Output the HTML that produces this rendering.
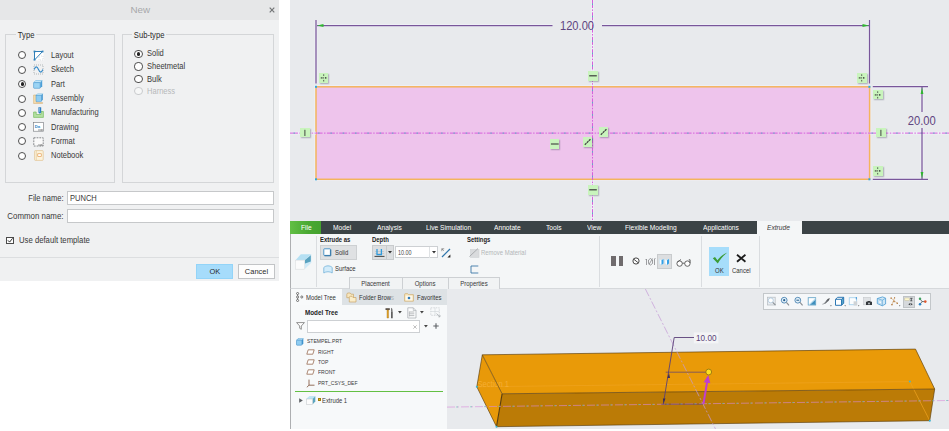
<!DOCTYPE html>
<html lang="en">
<head>
<meta charset="utf-8">
<title>New</title>
<style>
*{box-sizing:border-box;margin:0;padding:0}
html,body{width:949px;height:431px;overflow:hidden;background:#fff}
body{position:relative;font-family:"Liberation Sans",sans-serif;font-size:8px;color:#2b2b2b}
.abs,.abs *{position:absolute}
.t{position:absolute;white-space:nowrap;line-height:10px}
/* dialog */
#dlg{position:absolute;left:0;top:0;width:279px;height:281px;background:#f0f1f2}
#dlg .title{position:absolute;left:0;top:0;width:279px;height:19.500px;background:#e6e7e8}
#dlg .title span{position:absolute;left:0.700px;width:279px;text-align:center;top:3.300px;font-size:9.800px;line-height:13px;color:#a6a8aa}
.fs{position:absolute;border:1px solid #d4d6d8}
.fs .lg{position:absolute;top:-5.500px;background:#f0f1f2;padding:0 2px;font-size:8.300px;line-height:10px;color:#2a2a2a;transform:scaleX(.92);transform-origin:0 50%}
.rd{position:absolute;width:8.200px;height:8.200px;border:1px solid #4f4f4f;border-radius:50%;background:#fff}
.rd.on::after{content:"";position:absolute;left:1.400px;top:1.400px;width:3.400px;height:3.400px;border-radius:50%;background:#222}
.rd.dis{border-color:#c9cbcd;background:#f6f7f7}
.lb{position:absolute;white-space:nowrap;font-size:8.200px;line-height:10px;color:#383838;transform:scaleX(.92);transform-origin:0 50%}
.lb.r{transform-origin:100% 50%}
.inp{position:absolute;background:#fff;border:1px solid #c6c8ca}
.btn{position:absolute;border:1px solid #c2c4c6;background:#fdfdfd;text-align:center;font-size:8px;line-height:14.400px;color:#2a2a2a}
.btn span{display:inline-block;transform:scaleX(.93)}
.ic{position:absolute}
/* right side */
#sk{position:absolute;left:290px;top:0;width:659px;height:221px;background:#e8eaed;overflow:hidden}
#app{position:absolute;left:290px;top:221px;width:659px;height:208px;background:#e8eaed;overflow:hidden}
.gb{position:absolute;background:#c9f4bd;box-shadow:.6px .8px 1.200px rgba(60,60,80,.35)}
.gb svg{position:absolute;left:0;top:0}
.mn{top:1.5px;font-size:7px;color:#fff;transform:scaleX(.95);transform-origin:0 50%}
.rb{font-weight:bold;font-size:6.9px;color:#222;transform:scaleX(.86);transform-origin:0 50%}
.rl{font-size:7px;color:#333;transform:scaleX(.85);transform-origin:0 50%}
.tr{font-size:6.100px;color:#383838;transform:scaleX(.83);transform-origin:0 50%}
.vs{position:absolute;top:15px;width:1px;height:51px;background:#dadde0}
.tab span{display:inline-block;transform:scaleX(.86)}
.tab{position:absolute;top:56.400px;height:11.600px;background:#f1f3f4;border:1px solid #cdd0d3;border-bottom:0;text-align:center;font-size:7px;line-height:11.600px;color:#383838}
</style>
</head>
<body>
<!-- ============ NEW DIALOG ============ -->
<div id="dlg">
  <div class="title"><span>New</span></div>
  <svg class="ic" style="left:268.500px;top:6.600px" width="6" height="6" viewBox="0 0 6 6"><path d="M.7 .7L5.300 5.300M5.300 .7L.7 5.300" stroke="#737577" stroke-width="1.200" fill="none"/></svg>

  <div class="fs" style="left:5px;top:34px;width:110px;height:149px"><span class="lg" style="left:10px">Type</span></div>
  <div class="fs" style="left:122px;top:34px;width:152px;height:149px"><span class="lg" style="left:9px">Sub-type</span></div>

  <!-- type radios -->
  <div class="rd" style="left:18.200px;top:51.0px"></div><svg class="ic" style="left:33px;top:49.8px" width="11" height="11" viewBox="0 0 11 11"><rect x="1" y="1" width="9.500" height="9.500" fill="#fff"/><path d="M1.500 10V1.500H10M1.500 10L9.500 1.500" fill="none" stroke="#2f7fb8" stroke-width="1"/><path d="M6 6h4v4H6z" fill="none" stroke="#c8ccd0" stroke-width=".6" stroke-dasharray="1 1"/><g fill="#2f7fb8"><rect x=".6" y=".6" width="1.800" height="1.800"/><rect x="8.700" y=".6" width="1.800" height="1.800"/><rect x=".6" y="8.800" width="1.800" height="1.800"/></g></svg><div class="lb" style="left:50.500px;top:50.6px">Layout</div>
  <div class="rd" style="left:18.200px;top:65.5px"></div><svg class="ic" style="left:33px;top:64.3px" width="11" height="11" viewBox="0 0 11 11"><rect x="1" y="1" width="9" height="9" fill="none" stroke="#9a9ea2" stroke-width=".7" stroke-dasharray="1 1"/><path d="M1.200 5.500C2.500 2 4 2 5.500 5.500S8.500 9 9.800 5.500" fill="none" stroke="#2f86c6" stroke-width="1.100"/></svg><div class="lb" style="left:50.500px;top:65.1px">Sketch</div>
  <div class="rd on" style="left:18.200px;top:80.0px"></div><svg class="ic" style="left:33px;top:79.8px" width="10" height="9" viewBox="0 0 10 9"><path d="M.6 2.600L2.600 .6h6.600L7.200 2.600z" fill="#c9e9f9" stroke="#55a8dc" stroke-width=".5"/><path d="M9.200 .6v5.600L7.200 8.300V2.600z" fill="#4a9fd8"/><rect x=".6" y="2.600" width="6.600" height="5.700" rx=".7" fill="#9bd4f4" stroke="#4496cf" stroke-width=".6"/></svg><div class="lb" style="left:50.500px;top:79.6px">Part</div>
  <div class="rd" style="left:18.200px;top:94.5px"></div><svg class="ic" style="left:33px;top:93.3px" width="11" height="11" viewBox="0 0 11 11"><path d="M.6 2h3v7.500h6v1H.6z" fill="#f5dcae" stroke="#d2ab6c" stroke-width=".5"/><path d="M3 2.300L4.500 .8h5.300L8.300 2.300z" fill="#c9e9f9" stroke="#55a8dc" stroke-width=".4"/><path d="M9.800 .8v6L8.300 8.400V2.300z" fill="#3f95cf"/><rect x="3" y="2.300" width="5.300" height="6.100" fill="#8fcdf2" stroke="#4496cf" stroke-width=".5"/></svg><div class="lb" style="left:50.500px;top:94.1px">Assembly</div>
  <div class="rd" style="left:18.200px;top:108.6px"></div><svg class="ic" style="left:33px;top:107.4px" width="11" height="11" viewBox="0 0 11 11"><path d="M.6 5h2.600v2.500h4.800V4.500h2.400v5.900H.6z" fill="#b5e0a2" stroke="#6ab650" stroke-width=".6"/><path d="M5.400 .3h2.800v5.200l-1.400 1.300l-1.400-1.300z" fill="#2f7fc2"/><path d="M6.400 .8v4" stroke="#bfe0f5" stroke-width=".6"/></svg><div class="lb" style="left:50.500px;top:108.2px">Manufacturing</div>
  <div class="rd" style="left:18.200px;top:123.0px"></div><svg class="ic" style="left:33px;top:122.3px" width="11" height="10" viewBox="0 0 11 10"><rect x=".6" y=".6" width="9.800" height="8.600" fill="#fff" stroke="#74787c" stroke-width=".6"/><text x="1.800" y="5.600" font-family="Liberation Sans, sans-serif" font-size="4.200" font-weight="bold" fill="#2f86c6">Da</text><path d="M5.500 8h4.500" stroke="#333" stroke-width="1.100" stroke-dasharray=".8 .5"/></svg><div class="lb" style="left:50.500px;top:122.6px">Drawing</div>
  <div class="rd" style="left:18.200px;top:137.3px"></div><svg class="ic" style="left:33px;top:136.6px" width="11" height="10" viewBox="0 0 11 10"><rect x=".8" y=".8" width="9.400" height="8.200" fill="#fafafa" stroke="#55595d" stroke-width=".7" stroke-dasharray="1.800 1" stroke-linecap="butt"/><path d="M5.500 8h4.300" stroke="#333" stroke-width="1" stroke-dasharray=".8 .5"/></svg><div class="lb" style="left:50.500px;top:136.9px">Format</div>
  <div class="rd" style="left:18.200px;top:151.5px"></div><svg class="ic" style="left:33.500px;top:150.3px" width="10" height="11" viewBox="0 0 10 11"><rect x=".6" y=".6" width="8.600" height="9.800" rx=".8" fill="#fcf3dc" stroke="#dbb981" stroke-width=".6"/><path d="M2.300 .8v9.400" stroke="#e2c48f" stroke-width=".6"/><rect x="3.800" y="3.800" width="3.400" height="2.800" fill="#fff" stroke="#df8b35" stroke-width=".6"/></svg><div class="lb" style="left:50.500px;top:151.1px">Notebook</div>

  <!-- subtype radios -->
  <div class="rd on" style="left:134.400px;top:49.8px"></div><div class="lb" style="left:147.100px;top:49.4px">Solid</div>
  <div class="rd" style="left:134.400px;top:62.4px"></div><div class="lb" style="left:147.100px;top:62.0px">Sheetmetal</div>
  <div class="rd" style="left:134.400px;top:74.9px"></div><div class="lb" style="left:147.100px;top:74.5px">Bulk</div>
  <div class="rd dis" style="left:134.400px;top:87.3px"></div><div class="lb" style="left:147.100px;top:86.9px;color:#b6b8ba">Harness</div>

  <div class="lb r" style="left:0;width:63.500px;text-align:right;top:193.600px">File name:</div>
  <div class="inp" style="left:67px;top:190.800px;width:207.300px;height:14.200px"></div>
  <div class="lb" style="left:70px;top:193.600px">PUNCH</div>
  <div class="lb r" style="left:0;width:63.500px;text-align:right;top:211.700px;transform:scaleX(.965)">Common name:</div>
  <div class="inp" style="left:67px;top:209.300px;width:207.300px;height:14.200px"></div>

  <div class="inp" style="left:6.300px;top:236.600px;width:7.800px;height:7.800px;border-color:#4a4a4a"></div>
  <svg class="ic" style="left:7px;top:237.300px" width="6.500" height="6.500" viewBox="0 0 7 7"><path d="M1 3.600L2.800 5.500L6 1.400" stroke="#222" stroke-width="1" fill="none"/></svg>
  <div class="lb" style="left:19.100px;top:235.800px;transform:scaleX(.943)">Use default template</div>

  <div style="position:absolute;left:0;top:257px;width:279px;height:1px;background:#dcdee0"></div>
  <div class="btn" style="left:196px;top:264px;width:37px;height:15.400px;background:#a6dcfb;border-color:#93d4f8"><span>OK</span></div>
  <div class="btn" style="left:237.800px;top:264px;width:37px;height:15.400px"><span>Cancel</span></div>
</div>

<!-- ============ SKETCH ============ -->
<div id="sk">
<svg width="659" height="221" viewBox="290 0 659 221" style="position:absolute;left:0;top:0">
  <rect x="316" y="86.800" width="553.600" height="92.500" fill="none" stroke="#eef0f8" stroke-width="3.200"/>
  <g stroke="#eef0f6" stroke-width="3" fill="none">
    <path d="M316 20V83.400M869.500 20V83.400M317 25.600H552.500M602 25.600H869"/>
    <path d="M872.800 86.700H928M872.800 179.300H928M922 87V112M922 128V179"/>
  </g>
  <rect x="316" y="86.800" width="553.600" height="92.500" fill="#eec4ec" stroke="#f4b45c" stroke-width="1.500"/>
  <!-- centerlines -->
  <path d="M290 133.100H316M869.600 133.100H949M592.500 0V86M592.500 180V221" fill="none" stroke="#eef0f6" stroke-width="2.600"/>
  <g fill="none" stroke-width="1">
    <path d="M290 133.100H949" stroke="#d75fdc" stroke-dasharray="8 1.400 1.500 1.400"/>
    <path d="M290 133.100H949" stroke="#55b4c6" stroke-dasharray="1.500 10.800" stroke-dashoffset="-3.500"/>
    <path d="M592.500 0V221" stroke="#d75fdc" stroke-dasharray="8 1.400 1.500 1.400"/>
    <path d="M592.500 0V221" stroke="#55b4c6" stroke-dasharray="1.500 10.800" stroke-dashoffset="-3.500"/>
  </g>
  <!-- dimensions -->
  <g stroke="#79569a" stroke-width="1.250" fill="none">
    <path d="M316 20V83.400M869.500 20V83.400M317 25.600H552.500M602 25.600H869"/>
    <path d="M872.800 86.700H928M872.800 179.300H928M922 87V112M922 128V179"/>
  </g>
  <g fill="#2fb62f">
    <path d="M317 25.600l6.500 -1.500v3z"/><path d="M869 25.600l-6.500 -1.500v3z"/>
    <path d="M922 87.500l-1.400 6.500h2.800z"/><path d="M922 178.500l-1.400 -6.500h2.800z"/>
  </g>
  <g fill="#2fa8dc"><rect x="315" y="85.800" width="2" height="2"/><rect x="868.400" y="85.800" width="2" height="2"/><rect x="315" y="178.300" width="2" height="2"/><rect x="868.400" y="178.300" width="2" height="2"/></g>
  <g font-family="Liberation Sans, sans-serif" font-size="12.600" fill="#5f4580">
    <text x="560" y="30.200" textLength="34" lengthAdjust="spacingAndGlyphs">120.00</text>
    <text x="907.700" y="125.200" textLength="28" lengthAdjust="spacingAndGlyphs">20.00</text>
  </g>
</svg>
<!-- constraint markers -->
<div class="gb" style="left:29px;top:72.8px;width:9.4px;height:9.8px"><svg width="9.400" height="9.800" viewBox="0 0 9.400 9.800"><path d="M4.700 1.300v1.600M4.700 6.900v1.600" stroke="#333" stroke-width=".8"/><path d="M1.200 4.900L3.400 4V5.800zM8.200 4.900L6 4V5.800z" fill="#2e2e2e"/><rect x="4.300" y="4.300" width=".8" height="1.200" fill="#333"/></svg></div>
<div class="gb" style="left:567.4px;top:72.8px;width:9.4px;height:9.8px"><svg width="9.400" height="9.800" viewBox="0 0 9.400 9.800"><path d="M4.700 1.300v1.600M4.700 6.900v1.600" stroke="#333" stroke-width=".8"/><path d="M1.200 4.900L3.400 4V5.800zM8.200 4.900L6 4V5.800z" fill="#2e2e2e"/><rect x="4.300" y="4.300" width=".8" height="1.200" fill="#333"/></svg></div>
<div class="gb" style="left:583.3px;top:89.5px;width:9.4px;height:9.8px"><svg width="9.400" height="9.800" viewBox="0 0 9.400 9.800"><path d="M4.700 1.300v1.600M4.700 6.900v1.600" stroke="#333" stroke-width=".8"/><path d="M1.200 4.900L3.400 4V5.800zM8.200 4.900L6 4V5.800z" fill="#2e2e2e"/><rect x="4.300" y="4.300" width=".8" height="1.200" fill="#333"/></svg></div>
<div class="gb" style="left:583.3px;top:166.4px;width:9.4px;height:9.8px"><svg width="9.400" height="9.800" viewBox="0 0 9.400 9.800"><path d="M4.700 1.300v1.600M4.700 6.900v1.600" stroke="#333" stroke-width=".8"/><path d="M1.200 4.900L3.400 4V5.800zM8.200 4.900L6 4V5.800z" fill="#2e2e2e"/><rect x="4.300" y="4.300" width=".8" height="1.200" fill="#333"/></svg></div>
<div class="gb" style="left:297.8px;top:71.4px;width:10px;height:9.6px"><svg width="10" height="9.600" viewBox="0 0 10 9.600"><path d="M1.200 4.800H8.800" stroke="#3c3c3c" stroke-width="1.200"/></svg></div>
<div class="gb" style="left:297.8px;top:185.2px;width:10px;height:9.6px"><svg width="10" height="9.600" viewBox="0 0 10 9.600"><path d="M1.200 4.800H8.800" stroke="#3c3c3c" stroke-width="1.200"/></svg></div>
<div class="gb" style="left:259.9px;top:138.6px;width:9.6px;height:10px"><svg width="9.600" height="10" viewBox="0 0 9.600 10"><path d="M.9 5H8.700" stroke="#3c3c3c" stroke-width="1.100"/></svg></div>
<div class="gb" style="left:293px;top:137.1px;width:9.4px;height:9.8px"><svg width="9.400" height="9.800" viewBox="0 0 9.400 9.800"><path d="M1.800 7.700L7.600 2.100" stroke="#444" stroke-width="1.300" stroke-dasharray="2.300 .5"/></svg></div>
<div class="gb" style="left:309px;top:127.4px;width:9.4px;height:9.8px"><svg width="9.400" height="9.800" viewBox="0 0 9.400 9.800"><path d="M1.800 7.700L7.600 2.100" stroke="#444" stroke-width="1.300" stroke-dasharray="2.300 .5"/></svg></div>
<div class="gb" style="left:10.3px;top:127.7px;width:9.8px;height:9.8px"><svg width="9.800" height="9.800" viewBox="0 0 9.800 9.800"><path d="M4.900 1.800V8" stroke="#333" stroke-width=".9"/></svg></div>
<div class="gb" style="left:586px;top:127.7px;width:9.8px;height:9.8px"><svg width="9.800" height="9.800" viewBox="0 0 9.800 9.800"><path d="M4.900 1.800V8" stroke="#333" stroke-width=".9"/></svg></div>
</div>

<!-- ============ APP ============ -->
<div id="app">
<!-- 3D graphics -->
<svg width="659" height="208" viewBox="290 221 659 208" style="position:absolute;left:0;top:0">
  <!-- box faces -->
  <polygon points="482.3,354.8 915.5,349.1 934.7,389 502.1,393.8" fill="#e99a08"/>
  <polygon points="482.3,354.8 502.1,393.8 496.5,426.7 476.8,386.8" fill="#e89909"/>
  <polygon points="502.1,393.8 934.7,389 929.8,420.7 496.5,426.7" fill="#bb7b06"/>
  <!-- hidden section outline -->
  <g fill="none" stroke="#efa31f" stroke-width="0.7">
    <path d="M476.8 386.8L909.8 381.6L929.8 420.7"/>
  </g>
  <text x="477.4" y="387.3" font-family="Liberation Sans, sans-serif" font-size="8.2" fill="#f5ae34" textLength="31.5" lengthAdjust="spacingAndGlyphs">Section 1</text>
  <g fill="none" stroke="#5a3d0c" stroke-width="0.65">
    <path d="M482.3 354.8L915.5 349.1L934.7 389L502.1 393.8Z"/>
    <path d="M482.3 354.8L476.8 386.8L496.5 426.7"/><path d="M496.5 426.700L502.100 393.800" stroke-width="1.100"/>
    <path d="M934.7 389L929.8 420.7L496.5 426.7"/>
  </g>
  <g fill="#35b7d9"><circle cx="476.8" cy="386.8" r="1"/><circle cx="909.8" cy="381.6" r="1"/><circle cx="929.8" cy="420.800" r="1"/><circle cx="496.500" cy="426.800" r="1"/></g>
  <!-- axes -->
  <g fill="none" stroke-width=".8" stroke-dasharray="8 2 2 2">
    <path d="M447 407.1L949 400.5" stroke="#d98ad9" opacity=".75"/>
    <path d="M645.4 289L715.5 429" stroke="#c49ad6" opacity=".9"/>
  </g>
  <path d="M447 407.1L949 400.5" fill="none" stroke="#5fc0b0" stroke-width=".8" stroke-dasharray="2 12" stroke-dashoffset="-9" opacity=".7"/>
  <!-- depth dimension -->
  <rect x="693.8" y="332.4" width="24.6" height="11" fill="#f3f4f6"/>
  <text x="696" y="341.3" font-family="Liberation Sans, sans-serif" font-size="8.6" fill="#5b4478" textLength="20.5" lengthAdjust="spacingAndGlyphs">10.00</text>
  <g fill="none" stroke="#5a3f78" stroke-width="0.9">
    <path d="M694 337.5H674.2L663.3 404.2"/>
    <path d="M665.7 372.200H706M661.3 404.200H703" stroke-width=".7"/>
  </g>
  <path d="M669 373l-1.6 5h2.6zM663.5 403.5l-0.6 -5h2.6z" fill="#3a2a55"/>
  <path d="M703.4 404L707.3 381" stroke="#c03fd0" stroke-width="2" fill="none"/>
  <path d="M708.3 375l-4.6 7.2 6.6 1.1z" fill="#c03fd0"/>
  <circle cx="708.7" cy="372" r="2.9" fill="#ffe11f" stroke="#8a6a10" stroke-width="0.8"/>
</svg>
<!-- graphics toolbar -->
<div style="position:absolute;left:473.2px;top:72.2px;width:167.5px;height:16.5px;background:#f5f7f9;border:1px solid #c3c7ca"></div>
<div style="position:absolute;left:612.900px;top:74.500px;width:12.200px;height:12.200px;background:#d6d9dc;border:1px solid #bfc3c6"></div>
<svg width="168" height="17" viewBox="763 293 168 17" style="position:absolute;left:473px;top:72px">
  <!-- 1 zoom fit -->
  <rect x="767.400" y="297.200" width="7.800" height="7.800" fill="#e9edf1" stroke="#b4bac0" stroke-width=".7"/>
  <circle cx="770.800" cy="300.400" r="2.500" fill="#fff" stroke="#a9c4d9" stroke-width=".8"/><path d="M772.700 302.400l2.800 2.800" stroke="#8a9096" stroke-width="1.100"/>
  <!-- 2 zoom in -->
  <circle cx="784.200" cy="300.200" r="2.900" fill="#e3f0f9" stroke="#4d86b3" stroke-width=".9"/><circle cx="784.200" cy="300.200" r="1.100" fill="#245d8c"/><path d="M786.400 302.400l2.600 3" stroke="#858b91" stroke-width="1.100"/>
  <!-- 3 zoom out -->
  <circle cx="797.800" cy="300.200" r="2.900" fill="#e3f0f9" stroke="#4d86b3" stroke-width=".9"/><path d="M796.400 300.200h2.800" stroke="#245d8c" stroke-width="1"/><path d="M800 302.400l2.600 3" stroke="#858b91" stroke-width="1.100"/>
  <!-- 4 repaint -->
  <rect x="808.200" y="297.700" width="7.500" height="7.300" fill="#fdfeff" stroke="#5b9fc4" stroke-width=".8"/><path d="M815.400 299.500v5.200h-5.600z" fill="#3f8fbd"/><path d="M815.400 298v1.500l-5.600 5.200h-1.300z" fill="#b9dcee"/>
  <!-- 5 shading -->
  <path d="M821.800 304.400c3-.3 3.600-2.600 4.700-4.200c.9-1.300 2-1.800 3.300-2.300c-.2 1.600-1 2.600-2.100 3.700c-1.500 1.500-2.900 3.100-5.900 2.800z" fill="#55585c"/><path d="M822.500 304c2.500-.6 3.500-2.300 4.600-3.600" stroke="#9a9ea2" stroke-width=".6" fill="none"/><path d="M830.200 305.200h1.500l-.75 1.200z" fill="#555"/>
  <!-- 6 saved orientations -->
  <path d="M835.500 299.300h6v6h-6z" fill="#fdfeff"/><path d="M841.500 299.300l2.200-2v6l-2.200 2z" fill="#58a6c8"/><path d="M835.500 299.300h6v6h-6zM835.500 299.300l2.200-2h6l-2.200 2M843.700 297.300v6l-2.200 2" fill="none" stroke="#2d78b4" stroke-width="1" stroke-linejoin="round"/><path d="M844.400 305.200h1.500l-.75 1.200z" fill="#555"/>
  <!-- 7 view manager -->
  <rect x="849.300" y="297.700" width="7.300" height="7" fill="#fbfdfe" stroke="#a6d2ee" stroke-width=".9"/><rect x="853.600" y="301.300" width="3.600" height="4.200" fill="#cfd3d6"/><path d="M856.300 297v2.400" stroke="#3c8ed0" stroke-width=".9"/><path d="M858 305.300h1.400l-.7 1.100z" fill="#555"/>
  <!-- 8 camera -->
  <rect x="863.500" y="297.400" width="7" height="7.400" fill="#dfe2e5" stroke="#c3c7cb" stroke-width=".6"/><path d="M866 301.700h1.200l.5-.7h2.400l.5.700h1.400v3.400h-6z" fill="#34383c"/><circle cx="869" cy="303.400" r="1" fill="#b9bdc1"/>
  <!-- 9 perspective -->
  <path d="M877.300 298.500l5.300-1.600l3 1.300v5.800l-3.300 1.800l-5-2.200z" fill="#cfe7f6" stroke="#4a9ad2" stroke-width=".8" stroke-linejoin="round"/><path d="M877.300 298.500l5 1.700l3.300-2M882.300 300.200v5.600" stroke="#4a9ad2" stroke-width=".6" fill="none"/><path d="M879 300.500l2.300.8v2.800l-2.300-.9z" fill="#fff" stroke="#7fb9e0" stroke-width=".4"/>
  <!-- 10 datum display -->
  <g fill="#a8692a"><rect x="890.500" y="297.500" width="1.300" height="1.300"/><rect x="894" y="297.300" width="1.100" height="1.100"/><rect x="893.300" y="300.800" width="1.400" height="1.400"/><rect x="891.300" y="304" width="1.300" height="1.300"/><rect x="896.600" y="302.600" width="1.300" height="1.300"/></g>
  <path d="M891 298l6.300 5.300M894.600 297.800l-2.700 6.800" stroke="#c99457" stroke-width=".5"/><path d="M899 305.300h1.400l-.7 1.100z" fill="#555"/>
  <!-- 11 annotation display -->
  <rect x="904.800" y="298" width="4.400" height="2.300" fill="#fdf7cf" stroke="#c9c29a" stroke-width=".5"/><path d="M910.200 298.300h2.300M911.300 298.300v2.600M910.300 300.800h2" stroke="#3e4246" stroke-width=".8" fill="none"/><path d="M908.300 304.200q2.200-2 4.400 0q-2.200 2-4.400 0z" fill="#3a3e42"/><circle cx="910.500" cy="304.200" r=".6" fill="#d5d8db"/>
  <!-- 12 spin center -->
  <path d="M922 301.600l-2-2.900M922 301.600l-2 2.700M922 301.600h3.200" stroke="#4a4e52" stroke-width=".8" fill="none"/>
  <circle cx="920" cy="298.700" r="1.250" fill="#3fa060"/><circle cx="920" cy="304.300" r="1.250" fill="#2b83c6"/><circle cx="925.300" cy="301.600" r="1.300" fill="#e0582f"/>
</svg>
<!-- menubar -->
<div style="position:absolute;left:0;top:0;width:659px;height:13px;background:#3b4346"></div>
<div style="position:absolute;left:0;top:0;width:31px;height:13px;background:linear-gradient(90deg,#62bf45,#49a832 60%,#44a22e)"></div>
<div style="position:absolute;left:466.6px;top:0;width:45.4px;height:13px;background:#f4f6f7"></div>
<div class="t mn" style="left:10.7px">File</div>
<div class="t mn" style="left:43px">Model</div>
<div class="t mn" style="left:87.2px">Analysis</div>
<div class="t mn" style="left:135.6px">Live Simulation</div>
<div class="t mn" style="left:204.4px">Annotate</div>
<div class="t mn" style="left:255.9px">Tools</div>
<div class="t mn" style="left:297px">View</div>
<div class="t mn" style="left:335.4px">Flexible Modeling</div>
<div class="t mn" style="left:413px">Applications</div>
<div class="t mn" style="left:476.7px;color:#3a3a3a;font-style:italic">Extrude</div>
<!-- ribbon -->
<div style="position:absolute;left:0;top:13px;width:659px;height:55px;background:#f4f6f7;border-bottom:1px solid #d5d8db;border-left:1px solid #adafb1"></div>
<div class="vs" style="left:26px"></div><div class="vs" style="left:309px"></div><div class="vs" style="left:411px"></div><div class="vs" style="left:469px"></div>
<!-- extrude feature icon -->
<svg class="ic" style="left:5px;top:32px" width="17" height="17" viewBox="0 0 17 17">
  <path d="M0.500 7.200L5.800 1.300h10.500L9.600 7.200z" fill="#b5e0f3"/>
  <path d="M16.300 1.300v8.500L9.600 16.200V7.200z" fill="#cfeaf8"/>
  <path d="M10 6.900L15.800 2.200v6.300L10 10.400z" fill="#5aa3c0"/>
  <rect x=".5" y="7.200" width="9.100" height="9" fill="#fbfbfb" stroke="#dcdee0" stroke-width=".6"/>
</svg>
<div class="t rb" style="left:30.2px;top:13.5px">Extrude as</div>
<div class="t rb" style="left:82.3px;top:13.5px">Depth</div>
<div class="t rb" style="left:176.5px;top:13.5px">Settings</div>
<div style="position:absolute;left:30.2px;top:24.2px;width:36.7px;height:14.4px;background:#dfe1e3;border:1px solid #cdd0d2"></div>
<svg class="ic" style="left:33px;top:27.1px" width="9" height="9" viewBox="0 0 9 9"><rect x=".8" y=".8" width="6.600" height="6.600" rx=".5" fill="#fff" stroke="#3c8cc4" stroke-width=".9"/><path d="M7.800 1.500v6.300h-6.300" stroke="#2a6d9e" stroke-width=".9" fill="none"/></svg>
<div class="t rl" style="left:44.8px;top:27.1px">Solid</div>
<svg class="ic" style="left:32.6px;top:43.6px" width="10" height="9" viewBox="0 0 10 9"><path d="M.8 2.500C3 .3 7 .3 9.200 2.500V8C7 6.300 3 6.300 .8 8z" fill="#d3ecfa" stroke="#7fb9dc" stroke-width=".9"/></svg>
<div class="t rl" style="left:44.8px;top:42.8px">Surface</div>
<!-- depth -->
<div style="position:absolute;left:81.9px;top:24.2px;width:21.7px;height:14.4px;background:#dddfe1;border:1px solid #c8cbcd"></div>
<div style="position:absolute;left:96.2px;top:24.7px;width:1px;height:13.4px;background:#c8cbcd"></div>
<svg class="ic" style="left:84px;top:27px" width="11" height="10" viewBox="0 0 11 10"><path d="M1 3.500H10M1 5.500H10" stroke="#b9bcbf" stroke-width=".6"/><path d="M3 1V6.600H7.400V1" fill="none" stroke="#2f9bdc" stroke-width="1.300"/><path d="M.5 8.400H10.500" stroke="#333" stroke-width=".9"/></svg>
<svg class="ic" style="left:98px;top:30.4px" width="4" height="3" viewBox="0 0 4 3"><path d="M0 0h4l-2 2.600z" fill="#333"/></svg>
<div style="position:absolute;left:105.2px;top:25.3px;width:42.6px;height:12px;background:#fff;border:1px solid #cdd0d3"></div>
<div style="position:absolute;left:139.4px;top:25.8px;width:1px;height:11px;background:#dfe2e4"></div>
<svg class="ic" style="left:141.8px;top:30.4px" width="4" height="3" viewBox="0 0 4 3"><path d="M0 0h4l-2 2.600z" fill="#333"/></svg>
<div class="t rl" style="left:107.9px;top:26.6px;font-size:6.4px;color:#444">10.00</div>
<svg class="ic" style="left:150.5px;top:27px" width="10" height="10" viewBox="0 0 10 10"><path d="M1 9L9 1" stroke="#2f76ac" stroke-width="1.200"/><path d="M.8 .8h2.400M.8 .8v2.400M.8 .8l2 2" stroke="#777" stroke-width=".7" fill="none"/><path d="M9.400 9.400h-3l3-3z" fill="#222"/></svg>
<!-- settings -->
<svg class="ic" style="left:178.5px;top:26.5px" width="11" height="10" viewBox="0 0 11 10"><rect x="1.500" y="1.500" width="8.500" height="8" fill="#d9dbdd" stroke="#cfd2d4" stroke-width=".6"/><path d="M.5 8.500L9 .5" stroke="#a9acaf" stroke-width="1"/></svg>
<div class="t rl" style="left:191px;top:27.1px;color:#b3b6b8">Remove Material</div>
<svg class="ic" style="left:179.5px;top:43.5px" width="9" height="9" viewBox="0 0 9 9"><path d="M8.300 1H1V8H8.300" fill="none" stroke="#2f6fa3" stroke-width=".85"/></svg>
<div class="tab" style="left:59px;width:54px"><span>Placement</span></div>
<div class="tab" style="left:112px;width:47px"><span>Options</span></div>
<div class="tab" style="left:158px;width:51.600px"><span>Properties</span></div>
<!-- pause etc -->
<div style="position:absolute;left:321.4px;top:34.8px;width:4.600px;height:10.500px;background:#6f6b6d"></div>
<div style="position:absolute;left:329px;top:34.8px;width:4.400px;height:10.500px;background:#6f6b6d"></div>
<svg class="ic" style="left:341.5px;top:36.4px" width="8" height="8" viewBox="0 0 8 8"><circle cx="4" cy="4" r="3.100" fill="#fff" stroke="#333" stroke-width=".9"/><path d="M1.900 2.300L6.100 5.700" stroke="#333" stroke-width=".9"/></svg>
<svg class="ic" style="left:354.5px;top:36px" width="11" height="9" viewBox="0 0 11 9"><path d="M1.500 2v6M1.500 2l-1 1M9.500 2v6M9.500 2l1-1M3.500 3l2-1.500l2 1.500v3.500l-2 1.500l-2-1.500zM4 7.500l3.500-6" fill="none" stroke="#77797b" stroke-width=".7"/></svg>
<div style="position:absolute;left:367.2px;top:33px;width:14.800px;height:14.700px;background:#dcdee0;border:1px solid #c8cbcd"></div>
<svg class="ic" style="left:369.3px;top:37px" width="11" height="8" viewBox="0 0 11 8"><path d="M.5 1l2 1.300l2-1.300v4.500l-2 1.500l-2-1.500z" fill="#fff" stroke="#bfe1f5" stroke-width=".5"/><path d="M2.500 2.300l2-1.300v4.500l-2 1.500z" fill="#35a0e6"/><path d="M6 1l2 1.300l2-1.300v4.500l-2 1.500l-2-1.500z" fill="#fff" stroke="#bfe1f5" stroke-width=".5"/><path d="M8 2.300l2-1.300v4.500l-2 1.500z" fill="#35a0e6"/></svg>
<svg class="ic" style="left:385.5px;top:37.5px" width="16" height="8" viewBox="0 0 16 8"><circle cx="3.600" cy="4.600" r="2.700" fill="#fff" stroke="#555" stroke-width=".9"/><circle cx="11.400" cy="4.600" r="2.700" fill="#fff" stroke="#555" stroke-width=".9"/><path d="M6.300 4.200h2.400M1.500 3l3.500-2.500M14.100 4V.8h-1.300" fill="none" stroke="#555" stroke-width=".9"/></svg>
<!-- ok / cancel -->
<div style="position:absolute;left:418.7px;top:25.8px;width:20.800px;height:29.600px;background:#a6ddfb"></div>
<svg class="ic" style="left:421.5px;top:30.5px" width="16" height="12" viewBox="0 0 16 12"><path d="M.8 6.300L3 5l2.400 3.200C8 4.800 11.500 2 15.300 .6C11.500 3.500 8.500 7 5.800 11.400z" fill="#3c9c36"/></svg>
<svg class="ic" style="left:445.5px;top:33px" width="10.500" height="8.500" viewBox="0 0 10.500 8.500"><path d="M1 .8L9.500 7.700M9.500 .8L1 7.700" stroke="#1c1c1c" stroke-width="1.900" fill="none"/></svg>
<div class="t rl" style="left:418.7px;width:20.800px;text-align:center;top:44.8px;transform-origin:50% 50%">OK</div>
<div class="t rl" style="left:442px;top:44.8px">Cancel</div>
<!-- tree panel -->
<div style="position:absolute;left:0;top:68px;width:157px;height:140px;background:#f7f9fa;border-left:1px solid #adafb1"></div>
<div style="position:absolute;left:1px;top:68.3px;width:156px;height:15.5px;background:#dde2e5"></div>
<div style="position:absolute;left:1px;top:68.3px;width:51.3px;height:15.5px;background:#f8fafb"></div>
<svg class="ic" style="left:5.5px;top:71px" width="8" height="10" viewBox="0 0 8 10"><g fill="#fff" stroke="#444" stroke-width=".7"><circle cx="1.600" cy="1.500" r="1.050"/><circle cx="1.600" cy="5" r="1.050"/><circle cx="1.600" cy="8.500" r="1.050"/><circle cx="5.800" cy="5" r="1.050"/></g><path d="M1.600 2.600v1.300M1.600 6.100v1.300" stroke="#444" stroke-width=".6"/></svg>
<div class="t rl" style="left:16.4px;top:72px">Model Tree</div>
<svg class="ic" style="left:56px;top:71px" width="11" height="11" viewBox="0 0 11 11"><path d="M.8 2.500Q.8 1 2.200 1h2l1 1.200h2.300v3.500H.8z" fill="#f7e6bd" stroke="#c9a567" stroke-width=".7"/><path d="M3.300 5.500q0-1.200 1.200-1.200h1.500l1 1.200h3v4.500H3.300z" fill="#faedc9" stroke="#c9a567" stroke-width=".7"/></svg>
<div class="t rl" style="left:68.6px;top:72px">Folder Brow<span style="color:#aeb3b7">s</span></div>
<svg class="ic" style="left:114.4px;top:72.4px" width="10" height="9" viewBox="0 0 10 9"><path d="M.6 1.600Q.6 .6 1.600 .6h2l.8 1h5v6.600H.6z" fill="#f6e3b5" stroke="#cfae72" stroke-width=".7"/><rect x="1.500" y="2.600" width="7" height="4.800" fill="#fdf8ea"/><circle cx="5" cy="5" r="1.300" fill="#2e79b8"/></svg>
<div class="t rl" style="left:126.8px;top:72px">Favorites</div>
<div class="t rb" style="left:15.2px;top:86.5px;font-size:7px;transform:scaleX(.9)">Model Tree</div>
<!-- tools -->
<svg class="ic" style="left:95px;top:85.5px" width="9" height="12" viewBox="0 0 9 12"><path d="M.5 1.200h4.300v1.800H.5z" fill="#5a5148"/><path d="M2 3h1.600v8H2z" fill="#e2a32a" stroke="#a87414" stroke-width=".4"/><path d="M6 .8q1.500 .5 1.500 2v1.700H6z" fill="#777"/><path d="M6.200 4.500h1.400v6.700H6.200z" fill="#3b3b3b"/></svg>
<svg class="ic" style="left:108.3px;top:90px" width="4" height="3" viewBox="0 0 4 3"><path d="M0 0h3.800l-1.900 2.400z" fill="#444"/></svg>
<svg class="ic" style="left:116.6px;top:86px" width="10" height="12" viewBox="0 0 10 12"><path d="M.8 .8h5.500l2.700 2.700v7.500H.8z" fill="#fbfcfd" stroke="#a4a9ad" stroke-width=".7"/><path d="M6.300 .8v2.700h2.700" fill="none" stroke="#a4a9ad" stroke-width=".6"/><path d="M2.300 5h5M2.300 6.800h5M2.300 8.600h5" stroke="#8d9296" stroke-width=".6"/><path d="M2.300 4.500v5" stroke="#8d9296" stroke-width=".5"/></svg>
<svg class="ic" style="left:130px;top:90px" width="4" height="3" viewBox="0 0 4 3"><path d="M0 0h3.800l-1.900 2.400z" fill="#444"/></svg>
<svg class="ic" style="left:140px;top:86px" width="11" height="11" viewBox="0 0 11 11"><rect x=".8" y=".8" width="8.500" height="7.500" fill="none" stroke="#c5cacd" stroke-width=".7" stroke-dasharray="1.500 1"/><path d="M5 .8v7.500M.8 4.500h8.500" stroke="#cfd3d6" stroke-width=".6"/><path d="M6.500 6.500l3.500 3.300M8.300 9.800h1.700v-1.700" stroke="#a9aeb2" stroke-width=".8" fill="none"/></svg>
<!-- filter row -->
<svg class="ic" style="left:6.4px;top:101.3px" width="9" height="8" viewBox="0 0 9 8"><path d="M.6 .6h7.800L5.300 4v3.300L3.700 6.300V4z" fill="#fff" stroke="#666" stroke-width=".7"/></svg>
<div style="position:absolute;left:16.9px;top:98.7px;width:113.500px;height:13.500px;background:#fff;border:1px solid #cdd0d3"></div>
<svg class="ic" style="left:123.3px;top:103.8px" width="4" height="4" viewBox="0 0 4 4"><path d="M.3 .3L3.700 3.700M3.700 .3L.3 3.700" stroke="#999" stroke-width=".6"/></svg>
<svg class="ic" style="left:133.9px;top:104px" width="4" height="3" viewBox="0 0 4 3"><path d="M0 0h3.800l-1.900 2.400z" fill="#444"/></svg>
<svg class="ic" style="left:143.4px;top:102.3px" width="6" height="6" viewBox="0 0 6 6"><path d="M3 .3v5.400M.3 3h5.400" stroke="#5d6165" stroke-width="1.100"/></svg>
<!-- items -->
<svg class="ic" style="left:6.3px;top:117px" width="8" height="8" viewBox="0 0 8 8"><path d="M.5 2.200L2 .6h5.300L5.800 2.200z" fill="#bfe3f7" stroke="#4e9fd3" stroke-width=".5"/><path d="M7.300 .6v4.800L5.800 7.200V2.200z" fill="#3f95cf"/><rect x=".5" y="2.200" width="5.300" height="5" rx=".6" fill="#8fcdf2" stroke="#3f8fc7" stroke-width=".6"/></svg>
<div class="t tr" style="left:17.1px;top:115.4px">STEMPEL.PRT</div>
<svg class="ic" style="left:16.2px;top:127.6px" width="9" height="6" viewBox="0 0 9 6"><path d="M2.200 .8H8.200L6.800 5.200H.8z" fill="#fff" stroke="#8b5a3e" stroke-width=".7"/></svg>
<div class="t tr" style="left:27.8px;top:125.6px">RIGHT</div>
<svg class="ic" style="left:16.2px;top:137.8px" width="9" height="6" viewBox="0 0 9 6"><path d="M2.200 .8H8.200L6.800 5.200H.8z" fill="#fff" stroke="#8b5a3e" stroke-width=".7"/></svg>
<div class="t tr" style="left:27.8px;top:135.8px">TOP</div>
<svg class="ic" style="left:16.2px;top:148.2px" width="9" height="6" viewBox="0 0 9 6"><path d="M2.200 .8H8.200L6.800 5.200H.8z" fill="#fff" stroke="#8b5a3e" stroke-width=".7"/></svg>
<div class="t tr" style="left:27.8px;top:146.2px">FRONT</div>
<svg class="ic" style="left:16.2px;top:157.6px" width="9" height="9" viewBox="0 0 9 9"><path d="M3 .6V6.200H8.500M3 6.200L.8 8.300" fill="none" stroke="#7b4c33" stroke-width=".8"/></svg>
<div class="t tr" style="left:27.8px;top:156.5px">PRT_CSYS_DEF</div>
<div style="position:absolute;left:4.8px;top:169.8px;width:148.500px;height:1.200px;background:#63c043"></div>
<svg class="ic" style="left:9px;top:177.3px" width="4" height="5" viewBox="0 0 4 5"><path d="M.2 .2L3.800 2.500L.2 4.800z" fill="#5a5e62"/></svg>
<svg class="ic" style="left:16.2px;top:174.8px" width="10" height="9" viewBox="0 0 10 9"><path d="M.6 3L3.300 .5h6L6.500 3z" fill="#bfe6f5" stroke="#9fd4ea" stroke-width=".4"/><path d="M9.300 .5v5L6.500 8.500V3z" fill="#5ba5bf"/><rect x=".6" y="3" width="5.900" height="5.500" fill="#fcfcfc" stroke="#c9cdd0" stroke-width=".6"/></svg>
<div style="position:absolute;left:27.7px;top:177px;width:3.200px;height:3.400px;background:#f1c40f;border:.6px solid #9f7d0a"></div>
<div class="t tr" style="left:32.2px;top:174.6px;font-size:6.800px;transform:scaleX(.86)">Extrude 1</div>
</div>
</body>
</html>
